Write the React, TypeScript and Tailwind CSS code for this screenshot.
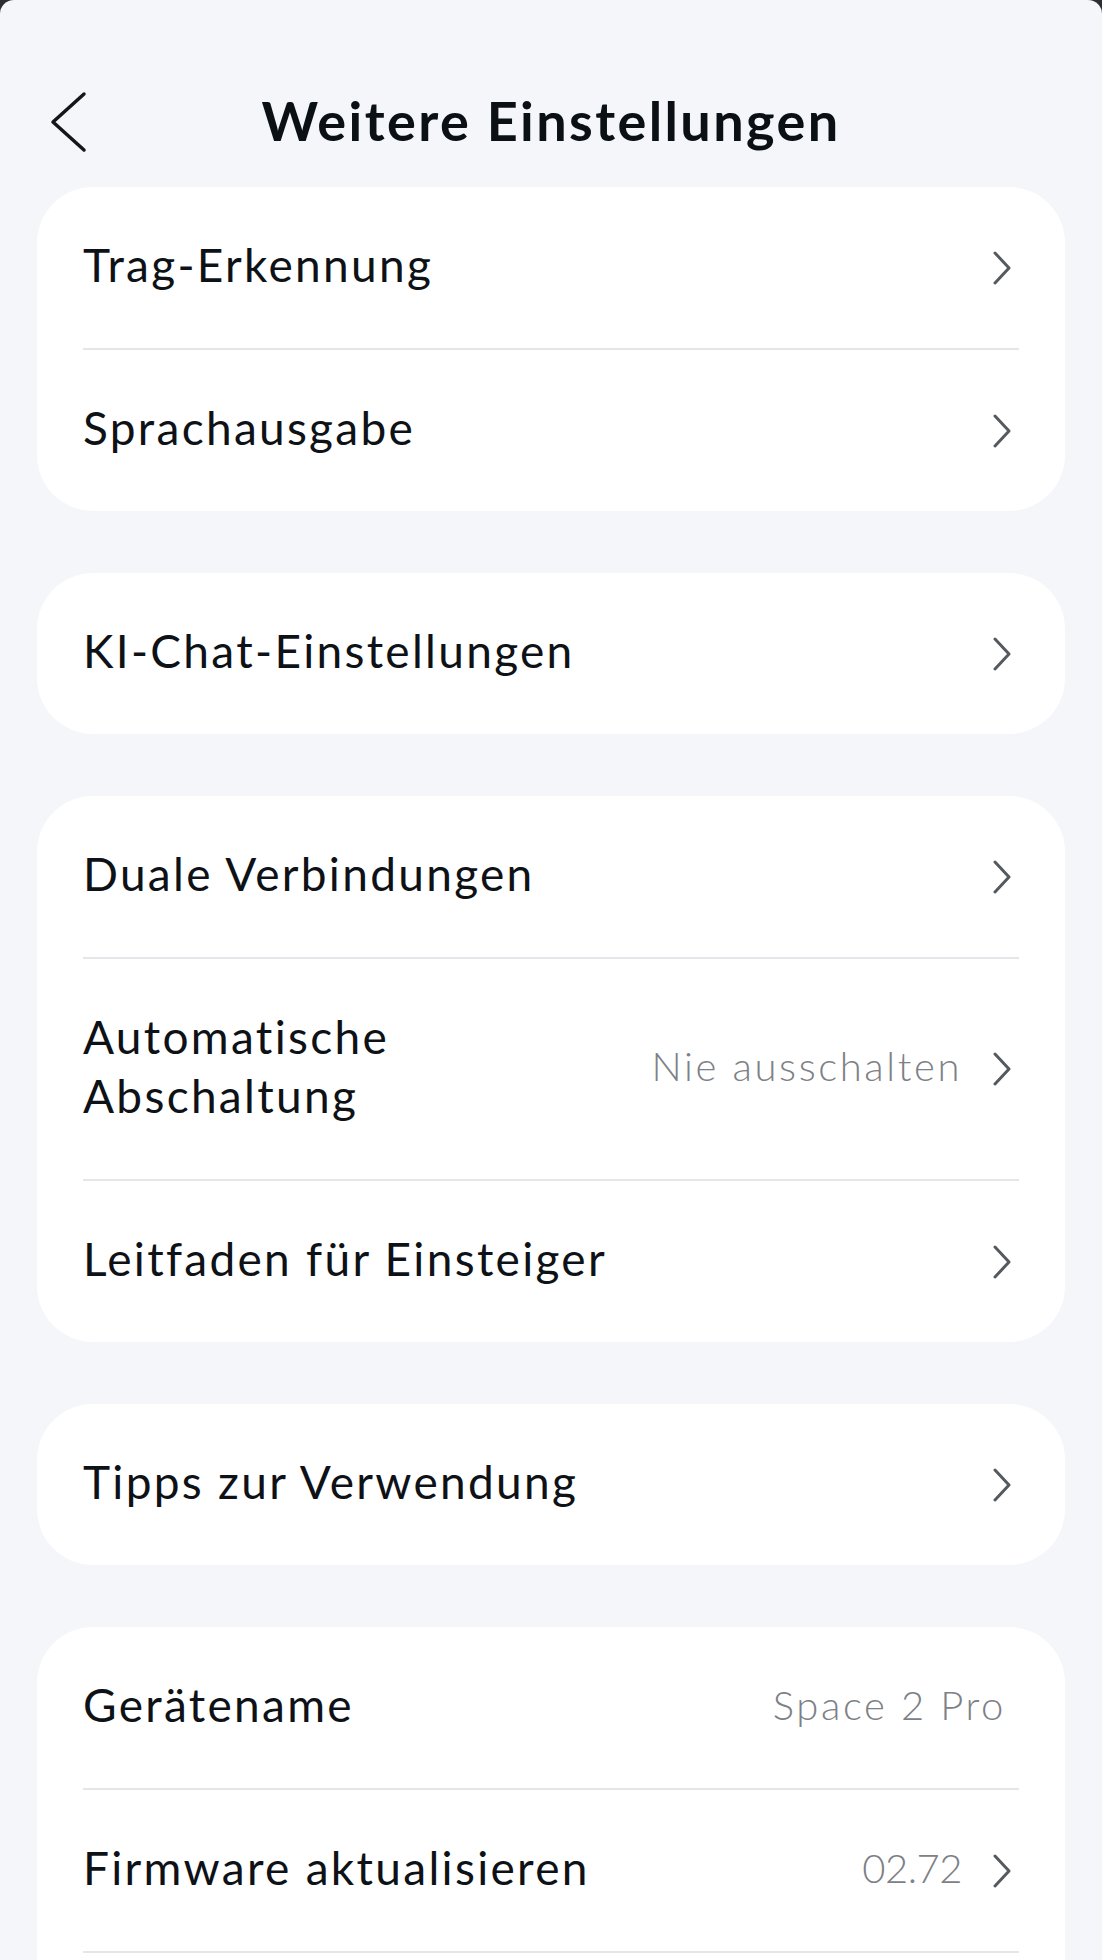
type Row = { label: string[]; value?: string; arrow?: boolean };

const groups: Row[][] = [
  [
    { label: ["Trag-Erkennung"], arrow: true },
    { label: ["Sprachausgabe"], arrow: true },
  ],
  [{ label: ["KI-Chat-Einstellungen"], arrow: true }],
  [
    { label: ["Duale Verbindungen"], arrow: true },
    { label: ["Automatische", "Abschaltung"], value: "Nie ausschalten", arrow: true },
    { label: ["Leitfaden für Einsteiger"], arrow: true },
  ],
  [{ label: ["Tipps zur Verwendung"], arrow: true }],
  [
    { label: ["Gerätename"], value: "Space 2 Pro" },
    { label: ["Firmware aktualisieren"], value: "02.72", arrow: true },
    { label: [] },
  ],
];

function Chevron() {
  return (
    <svg width="18" height="34" viewBox="0 0 18 34" className="shrink-0 mt-[6px]">
      <path d="M2 2 L16 17 L2 32" fill="none" stroke="#555a5f" strokeWidth="3" strokeLinecap="round" strokeLinejoin="round" />
    </svg>
  );
}

function SettingRow({ row }: { row: Row }) {
  const tall = row.label.length > 1;
  const numeric = row.value ? /^[\d.]+$/.test(row.value) : false;
  return (
    <div className={`flex items-center justify-between pb-[6px] ${tall ? "h-[220px]" : "h-[161px]"}`}>
      <div className="text-[46px] leading-[59px] tracking-[2.3px] text-[#0e1217]">
        {row.label.map((l) => (
          <div key={l}>{l}</div>
        ))}
      </div>
      <div className="flex items-center gap-[31px] mr-[8px]">
        {row.value && (
          <span
            className={`text-[40px] font-light text-[#7d8186] ${numeric ? "tracking-[-0.5px]" : "tracking-[2.6px]"} ${row.arrow ? "" : "mr-[5px]"}`}
          >
            {row.value}
          </span>
        )}
        {row.arrow && <Chevron />}
      </div>
    </div>
  );
}

export default function App() {
  return (
    <div className="bg-[#2a2d31] w-[1102px] h-[1960px] overflow-hidden">
      <div
        className="h-full bg-[#f4f6f9] rounded-t-[14px] px-[37px]"
        style={{ fontFamily: "Lato, 'Noto Sans', sans-serif" }}
      >
        <header className="relative h-[187px] flex justify-center pt-[80px]">
          <button className="absolute left-[12px] top-[90px]">
            <svg width="40" height="64" viewBox="0 0 40 64">
              <path d="M35 4 L4 32 L35 60" fill="none" stroke="#14171a" strokeWidth="3.5" strokeLinecap="round" strokeLinejoin="round" />
            </svg>
          </button>
          <h1 className="text-[54px] leading-[81px] h-[81px] font-bold text-[#0b1015] tracking-[2.4px]">
            Weitere Einstellungen
          </h1>
        </header>
        <div className="flex flex-col gap-[62px]">
          {groups.map((g, gi) => (
            <div key={gi} className="bg-white rounded-[56px] px-[46px]">
              {g.map((row, ri) => (
                <div key={ri}>
                  {ri > 0 && <div className="h-[2px] bg-[#e4e6e9]" />}
                  <SettingRow row={row} />
                </div>
              ))}
            </div>
          ))}
        </div>
      </div>
    </div>
  );
}
